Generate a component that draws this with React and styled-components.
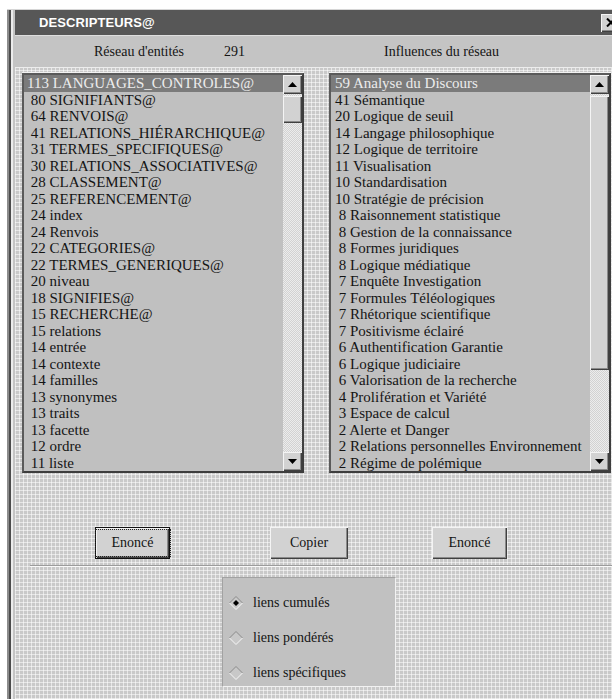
import React from 'react';
import styled, { createGlobalStyle, css } from 'styled-components';

const GlobalStyle = createGlobalStyle`
  html, body { margin: 0; padding: 0; background: #fff; overflow: hidden; }
  body { width: 612px; height: 699px; }
`;

const dither = css`
  background-color: #c9c9c9;
  background-image:
    repeating-linear-gradient(90deg, rgba(255,255,255,0.55) 0 1px, transparent 1px 4px),
    repeating-linear-gradient(0deg, rgba(255,255,255,0.55) 0 1px, transparent 1px 4px);
`;

const raised = css`
  background: #d2d2d2;
  box-shadow: inset 1px 1px #f4f4f4, inset -1px -1px #404040, inset -2px -2px #8a8a8a;
`;

const Window = styled.div`
  margin: 9px 0 0 7px;
  width: 613px;
  height: 690px;
  padding-left: 8px;
  box-sizing: border-box;
  border-top: 1px solid #d6d6d6;
  box-shadow: inset 2px 0 #8c8c8c, inset 4px 0 #4c4c4c, inset 6px 0 #ececec, inset 8px 0 #c4c4c4;
  display: flex;
  flex-direction: column;
  font-family: "Liberation Serif", "Times New Roman", serif;
  font-size: 14px;
  color: #141414;
`;

const TitleBar = styled.div`
  height: 25px;
  flex: none;
  background: #575757;
  border-bottom: 1px solid #dedede;
  display: flex;
  align-items: center;
  padding-left: 24px;
  color: #fff;
  font: bold 13px "Liberation Sans", Arial, sans-serif;
  letter-spacing: 0.1px;
`;

const Title = styled.span`
  flex: 1;
`;

const CloseButton = styled.div`
  ${raised};
  width: 19px;
  height: 18px;
  display: flex;
  align-items: center;
  justify-content: center;
`;

const Header = styled.div`
  height: 31px;
  flex: none;
  background: #c4c4c4;
  border-bottom: 1px solid #ededed;
  display: flex;
  align-items: center;
  padding-left: 79px;
`;

const HeaderLabel = styled.span`
  margin-left: ${p => p.$gap || 0}px;
`;

const Body = styled.div`
  ${dither};
  flex: 1;
  padding: 5px 0 0 7px;
  display: flex;
  flex-direction: column;
`;

const ListsRow = styled.div`
  display: flex;
  gap: 25px;
  height: 400px;
`;

const ListBox = styled.div`
  width: ${p => p.$width}px;
  box-sizing: border-box;
  border: 2px solid;
  border-color: #5a5a5a #3e3e3e #3e3e3e #5a5a5a;
  box-shadow: 0 -1px #f2f2f2;
  background: #c0c0c0;
  display: flex;
`;

const Rows = styled.div`
  flex: 1;
  overflow: hidden;
  font-size: 15px;
`;

const Row = styled.div`
  height: 16.5px;
  line-height: 16.5px;
  padding-left: ${p => p.$indent}px;
  white-space: pre;
  overflow: hidden;
  background: ${p => (p.$selected ? '#7b7b7b' : 'transparent')};
  color: ${p => (p.$selected ? '#ececec' : '#141414')};
`;

const ScrollBar = styled.div`
  width: 19px;
  flex: none;
  display: flex;
  flex-direction: column;
  background-color: #e6e6e6;
  background-image: repeating-conic-gradient(#d2d2d2 0 25%, #ececec 0 50%);
  background-size: 2px 2px;
`;

const ArrowButton = styled.div`
  ${raised};
  height: 19px;
  flex: none;
  display: flex;
  align-items: center;
  justify-content: center;
`;

const Thumb = styled.div`
  ${raised};
  flex: none;
  margin-top: 2px;
`;

const Track = styled.div`
  flex: 1;
`;

const ButtonsRow = styled.div`
  display: flex;
  margin-top: 54px;
  height: 32px;
`;

const PushButton = styled.div`
  ${raised};
  width: ${p => p.$width}px;
  margin-left: ${p => p.$offset}px;
  box-sizing: border-box;
  display: flex;
  align-items: center;
  justify-content: center;
  ${p => p.$default && css`
    border: 1px solid #111;
  `}
`;

const FocusRing = styled.span`
  padding: 2px 6px;
  outline: 1px dotted #222;
  outline-offset: 3px;
  width: 56px;
  text-align: center;
`;

const Separator = styled.div`
  margin: 6px 0 0 8px;
  height: 1px;
  background: #9c9c9c;
  border-bottom: 1px solid #fafafa;
`;

const RadioPanel = styled.div`
  margin: 10px 0 0 200px;
  width: 174px;
  height: 110px;
  box-sizing: border-box;
  background: #c1c1c1;
  border: 1px solid;
  border-color: #a2a2a2 #f2f2f2 #f2f2f2 #a2a2a2;
  padding: 7px 0 0 6px;
`;

const RadioRow = styled.div`
  height: 35px;
  display: flex;
  align-items: center;
  gap: 10px;
`;

const left = [
  [113, 'LANGUAGES_CONTROLES@'], [80, 'SIGNIFIANTS@'], [64, 'RENVOIS@'],
  [41, 'RELATIONS_HIÉRARCHIQUE@'], [31, 'TERMES_SPECIFIQUES@'], [30, 'RELATIONS_ASSOCIATIVES@'],
  [28, 'CLASSEMENT@'], [25, 'REFERENCEMENT@'], [24, 'index'], [24, 'Renvois'],
  [22, 'CATEGORIES@'], [22, 'TERMES_GENERIQUES@'], [20, 'niveau'], [18, 'SIGNIFIES@'],
  [15, 'RECHERCHE@'], [15, 'relations'], [14, 'entrée'], [14, 'contexte'], [14, 'familles'],
  [13, 'synonymes'], [13, 'traits'], [13, 'facette'], [12, 'ordre'], [11, 'liste'],
];

const right = [
  [59, 'Analyse du Discours'], [41, 'Sémantique'], [20, 'Logique de seuil'],
  [14, 'Langage philosophique'], [12, 'Logique de territoire'], [11, 'Visualisation'],
  [10, 'Standardisation'], [10, 'Stratégie de précision'], [8, 'Raisonnement statistique'],
  [8, 'Gestion de la connaissance'], [8, 'Formes juridiques'], [8, 'Logique médiatique'],
  [7, 'Enquête Investigation'], [7, 'Formules Téléologiques'], [7, 'Rhétorique scientifique'],
  [7, 'Positivisme éclairé'], [6, 'Authentification Garantie'], [6, 'Logique judiciaire'],
  [6, 'Valorisation de la recherche'], [4, 'Prolifération et Variété'], [3, 'Espace de calcul'],
  [2, 'Alerte et Danger'], [2, 'Relations personnelles Environnement'], [2, 'Régime de polémique'],
];

const Arrow = ({ down }) => (
  <svg width="9" height="5" viewBox="0 0 9 5">
    <polygon points={down ? '0,0 9,0 4.5,5' : '4.5,0 9,5 0,5'} fill="#000" />
  </svg>
);

const CloseGlyph = () => (
  <svg width="10" height="9" viewBox="0 0 10 9">
    <path d="M1 0.5 L9 8.5 M9 0.5 L1 8.5" stroke="#000" strokeWidth="2" />
  </svg>
);

const Diamond = ({ checked }) => (
  <svg width="14" height="14" viewBox="0 0 14 14">
    <polygon points="7,0.5 13.5,7 7,13.5 0.5,7" fill="#c8c8c8" />
    <path d="M0.5 7 L7 0.5 L13.5 7" fill="none" stroke="#8a8a8a" strokeWidth="1" />
    <path d="M0.5 7 L7 13.5 L13.5 7" fill="none" stroke="#f6f6f6" strokeWidth="1" />
    {checked && <polygon points="7,4 10,7 7,10 4,7" fill="#000" />}
  </svg>
);

const List = ({ items, digits, width, indent, thumb }) => (
  <ListBox $width={width}>
    <Rows>
      {items.map(([n, label], i) => (
        <Row key={i} $indent={indent} $selected={i === 0}>
          {String(n).padStart(digits, ' ')} {label}
        </Row>
      ))}
    </Rows>
    <ScrollBar>
      <ArrowButton><Arrow /></ArrowButton>
      <Thumb style={{ height: thumb }} />
      <Track />
      <ArrowButton><Arrow down /></ArrowButton>
    </ScrollBar>
  </ListBox>
);

export default function App() {
  return (
    <>
      <GlobalStyle />
      <Window>
        <TitleBar>
          <Title>DESCRIPTEURS@</Title>
          <CloseButton><CloseGlyph /></CloseButton>
        </TitleBar>
        <Header>
          <HeaderLabel>Réseau d'entités</HeaderLabel>
          <HeaderLabel $gap={40}>291</HeaderLabel>
          <HeaderLabel $gap={139}>Influences du réseau</HeaderLabel>
        </Header>
        <Body>
          <ListsRow>
            <List items={left} digits={3} width={282} indent={3} thumb={27} />
            <List items={right} digits={2} width={282} indent={4} thumb={274} />
          </ListsRow>
          <ButtonsRow>
            <PushButton $width={75} $offset={73} $default><FocusRing>Enoncé</FocusRing></PushButton>
            <PushButton $width={78} $offset={100}>Copier</PushButton>
            <PushButton $width={75} $offset={84}>Enoncé</PushButton>
          </ButtonsRow>
          <Separator />
          <RadioPanel>
            <RadioRow><Diamond checked />liens cumulés</RadioRow>
            <RadioRow><Diamond />liens pondérés</RadioRow>
            <RadioRow><Diamond />liens spécifiques</RadioRow>
          </RadioPanel>
        </Body>
      </Window>
    </>
  );
}
